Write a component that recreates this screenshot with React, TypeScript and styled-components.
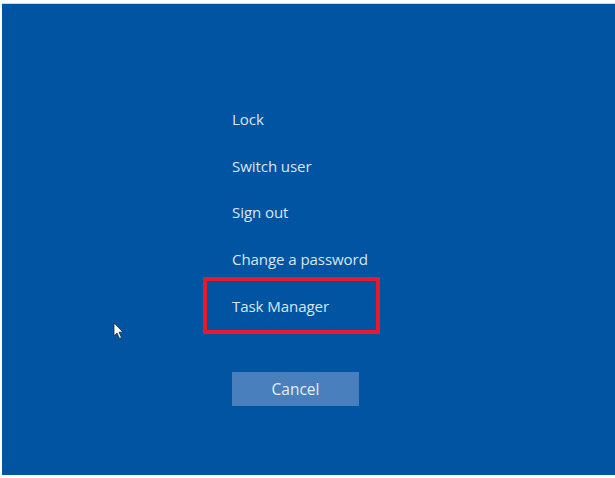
import React from "react";
import styled, { createGlobalStyle } from "styled-components";

const Global = createGlobalStyle`
  html, body { margin: 0; padding: 0; background: #ffffff; }
  body { width: 615px; height: 478px; overflow: hidden; }
`;

const Screen = styled.div`
  position: relative;
  margin: 3px 0 0 2px;
  width: 613px;
  height: 472px;
  background: #0054a2;
  border-top: 1px solid #c9d9e8;
  font-family: "Open Sans", "Noto Sans", "Liberation Sans", sans-serif;
  display: flex;
  flex-direction: column;
  padding: 92px 0 0 230px;
  box-sizing: border-box;
`;

const Menu = styled.ul`
  list-style: none;
  margin: 0;
  padding: 0;
  display: flex;
  flex-direction: column;
`;

const Item = styled.li<{ $highlight?: boolean }>`
  position: relative;
  height: 46.6px;
  display: flex;
  align-items: center;
  color: #d9e6f3;
  font-size: 15.1px;
  letter-spacing: -0.1px;
  cursor: default;
  &::after {
    content: "";
    display: ${(p) => (p.$highlight ? "block" : "none")};
    position: absolute;
    left: -29px;
    top: -5px;
    width: 177px;
    height: 57px;
    box-sizing: border-box;
    border: 4px solid #e8192c;
  }
`;

const CancelButton = styled.button`
  margin-top: 43px;
  width: 127px;
  height: 34px;
  border: none;
  background: #4a7fbe;
  color: #e4edf7;
  font-family: inherit;
  font-size: 15.5px;
  padding: 0;
`;

const Pointer = styled.svg`
  position: absolute;
  left: 111px;
  top: 318px;
`;

const items = ["Lock", "Switch user", "Sign out", "Change a password", "Task Manager"];

export default function App() {
  return (
    <>
      <Global />
      <Screen>
        <Menu>
          {items.map((t) => (
            <Item key={t} $highlight={t === "Task Manager"}>
              {t}
            </Item>
          ))}
        </Menu>
        <CancelButton>Cancel</CancelButton>
        <Pointer width="12" height="18" viewBox="0 0 12 18">
          <path
            d="M1 1 L1 14 L4 11 L6.5 16.5 L8.5 15.6 L6 10.2 L10 10.2 Z"
            fill="#ffffff"
            stroke="#1b2a3a"
            strokeWidth="0.8"
            strokeLinejoin="round"
          />
        </Pointer>
      </Screen>
    </>
  );
}
